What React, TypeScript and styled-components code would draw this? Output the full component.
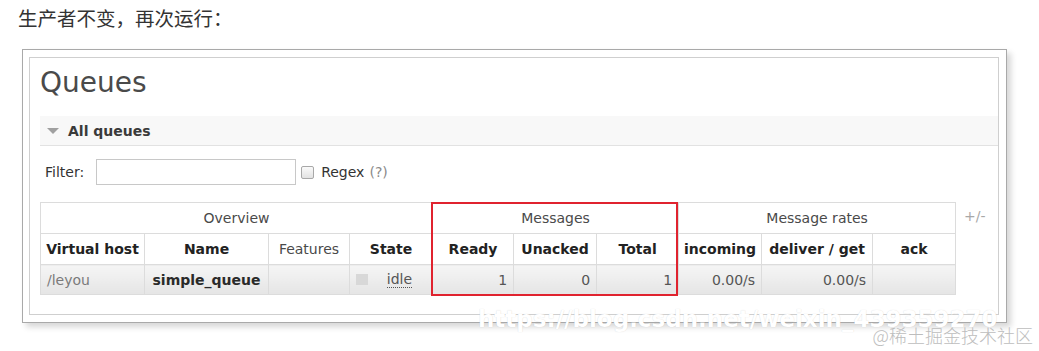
import React from "react";
import styled, { createGlobalStyle } from "styled-components";

const GlobalStyle = createGlobalStyle`
  html, body {
    margin: 0;
    padding: 0;
    background: #ffffff;
  }
  body {
    font-family: "DejaVu Sans", Verdana, sans-serif;
  }
`;

const Page = styled.div`
  position: relative;
  width: 1039px;
  height: 351px;
  overflow: hidden;
`;

const Intro = styled.p`
  margin: 0;
  padding: 4px 0 0 18px;
  line-height: 28px;
  font-size: 19.5px;
  color: #333;
  font-family: "Noto Sans CJK SC", "Noto Sans", sans-serif;
`;

const Frame = styled.div`
  margin: 17px 0 0 22px;
  width: 970px;
  padding: 7px 7px 7px 6px;
  border: 1px solid #a9a9a9;
  background: #fff;
  box-shadow: 4px 4px 6px rgba(0, 0, 0, 0.16);
`;

const Panel = styled.div`
  border: 1px solid #cfcfcf;
  padding: 8px 0 19px 10px;
`;

const Title = styled.h1`
  margin: 0;
  font-size: 28px;
  line-height: 34px;
  font-weight: normal;
  color: #4a4a4a;
`;

const SectionBar = styled.div`
  display: flex;
  align-items: center;
  gap: 9px;
  margin-top: 16px;
  height: 30px;
  padding-left: 7px;
  box-sizing: border-box;
  background: #f8f8f8;
  border-bottom: 1px solid #e2e2e2;
  font-size: 14px;
  font-weight: bold;
  color: #3a3a3a;
`;

const Triangle = styled.span`
  width: 0;
  height: 0;
  border-left: 6.5px solid transparent;
  border-right: 6.5px solid transparent;
  border-top: 6px solid #a0a0a0;
`;

const FilterRow = styled.div`
  display: flex;
  align-items: center;
  margin-top: 13px;
  padding-left: 5px;
  font-size: 14px;
  color: #333;
`;

const FilterInput = styled.span`
  display: block;
  width: 200px;
  height: 26px;
  box-sizing: border-box;
  margin-left: 12px;
  border: 1px solid #c8c8c8;
  background: #fff;
`;

const Checkbox = styled.span`
  display: block;
  width: 11px;
  height: 11px;
  margin: 0 7px 0 5px;
  border: 1px solid #a8a8a8;
  border-radius: 2px;
  background: linear-gradient(#fafafa, #e2e2e2);
`;

const Hint = styled.span`
  margin-left: 5px;
  color: #8a8a8a;
`;

const TableRow = styled.div`
  display: flex;
  align-items: flex-start;
  margin-top: 17px;
`;

const TableWrap = styled.div`
  position: relative;
`;

const Table = styled.table`
  border-collapse: collapse;
  table-layout: fixed;
  width: 915px;
  font-size: 14px;
`;

const HeadCell = styled.th<{ $bold?: boolean }>`
  height: 30px;
  padding: 0 4px;
  border: 1px solid #dcdcdc;
  background: #fff;
  text-align: center;
  white-space: nowrap;
  font-weight: ${(p) => (p.$bold ? "bold" : "normal")};
  color: ${(p) => (p.$bold ? "#222" : "#4a4a4a")};
`;

const Cell = styled.td<{ $align?: "left" | "center" | "right"; $tone?: string; $bold?: boolean }>`
  height: 29px;
  padding: 0 6px;
  border: 1px solid #dcdcdc;
  background: linear-gradient(#f5f5f5, #e5e5e5);
  white-space: nowrap;
  text-align: ${(p) => p.$align ?? "left"};
  color: ${(p) => p.$tone ?? "#555"};
  font-weight: ${(p) => (p.$bold ? "bold" : "normal")};
`;

const StateInner = styled.span`
  display: flex;
  align-items: center;
  justify-content: space-between;
  padding-right: 14px;
`;

const StateDot = styled.span`
  width: 12px;
  height: 11px;
  background: #d8d8d8;
`;

const Abbr = styled.span`
  color: #555;
  border-bottom: 1px dotted #555;
  line-height: 16px;
`;

const PlusMinus = styled.span`
  margin: 6px 0 0 8px;
  font-size: 14px;
  color: #a8a8a8;
`;

const Highlight = styled.div`
  position: absolute;
  left: 391px;
  top: 0px;
  width: 247px;
  height: 94px;
  box-sizing: border-box;
  border: 2px solid #e0232f;
  pointer-events: none;
`;

const Ghost = styled.div`
  position: absolute;
  left: 478px;
  top: 306px;
  font-size: 23px;
  font-weight: bold;
  color: #ffffff;
  text-shadow: 0 0 1px rgba(0, 0, 0, 0.16);
  white-space: nowrap;
`;

const Watermark = styled.div`
  position: absolute;
  right: 6px;
  top: 324px;
  font-size: 18px;
  line-height: 22px;
  color: #bdbdbd;
  font-family: "Noto Sans CJK SC", sans-serif;
  font-weight: 300;
  white-space: nowrap;
`;

const widths = [104, 124, 81, 83, 81, 83, 82, 83, 111, 83];

export default function App() {
  return (
    <Page>
      <GlobalStyle />
      <Intro>生产者不变，再次运行：</Intro>
      <Frame>
        <Panel>
          <Title>Queues</Title>
          <SectionBar>
            <Triangle />
            All queues
          </SectionBar>
          <FilterRow>
            Filter:
            <FilterInput />
            <Checkbox />
            Regex
            <Hint>(?)</Hint>
          </FilterRow>
          <TableRow>
            <TableWrap>
              <Table>
                <colgroup>
                  {widths.map((w, i) => (
                    <col key={i} style={{ width: w }} />
                  ))}
                </colgroup>
                <thead>
                  <tr>
                    <HeadCell colSpan={4}>Overview</HeadCell>
                    <HeadCell colSpan={3}>Messages</HeadCell>
                    <HeadCell colSpan={3}>Message rates</HeadCell>
                  </tr>
                  <tr>
                    <HeadCell $bold>Virtual host</HeadCell>
                    <HeadCell $bold>Name</HeadCell>
                    <HeadCell>Features</HeadCell>
                    <HeadCell $bold>State</HeadCell>
                    <HeadCell $bold>Ready</HeadCell>
                    <HeadCell $bold>Unacked</HeadCell>
                    <HeadCell $bold>Total</HeadCell>
                    <HeadCell $bold>incoming</HeadCell>
                    <HeadCell $bold>deliver / get</HeadCell>
                    <HeadCell $bold>ack</HeadCell>
                  </tr>
                </thead>
                <tbody>
                  <tr>
                    <Cell $tone="#7a7a7a">/leyou</Cell>
                    <Cell $align="center" $bold $tone="#2a2a2a">
                      simple_queue
                    </Cell>
                    <Cell />
                    <Cell>
                      <StateInner>
                        <StateDot />
                        <Abbr>idle</Abbr>
                      </StateInner>
                    </Cell>
                    <Cell $align="right">1</Cell>
                    <Cell $align="right">0</Cell>
                    <Cell $align="right">1</Cell>
                    <Cell $align="right">0.00/s</Cell>
                    <Cell $align="right">0.00/s</Cell>
                    <Cell />
                  </tr>
                </tbody>
              </Table>
              <Highlight />
            </TableWrap>
            <PlusMinus>+/-</PlusMinus>
          </TableRow>
        </Panel>
      </Frame>
      <Ghost>https://blog.csdn.net/weixin_439359270</Ghost>
      <Watermark>@稀土掘金技术社区</Watermark>
    </Page>
  );
}
